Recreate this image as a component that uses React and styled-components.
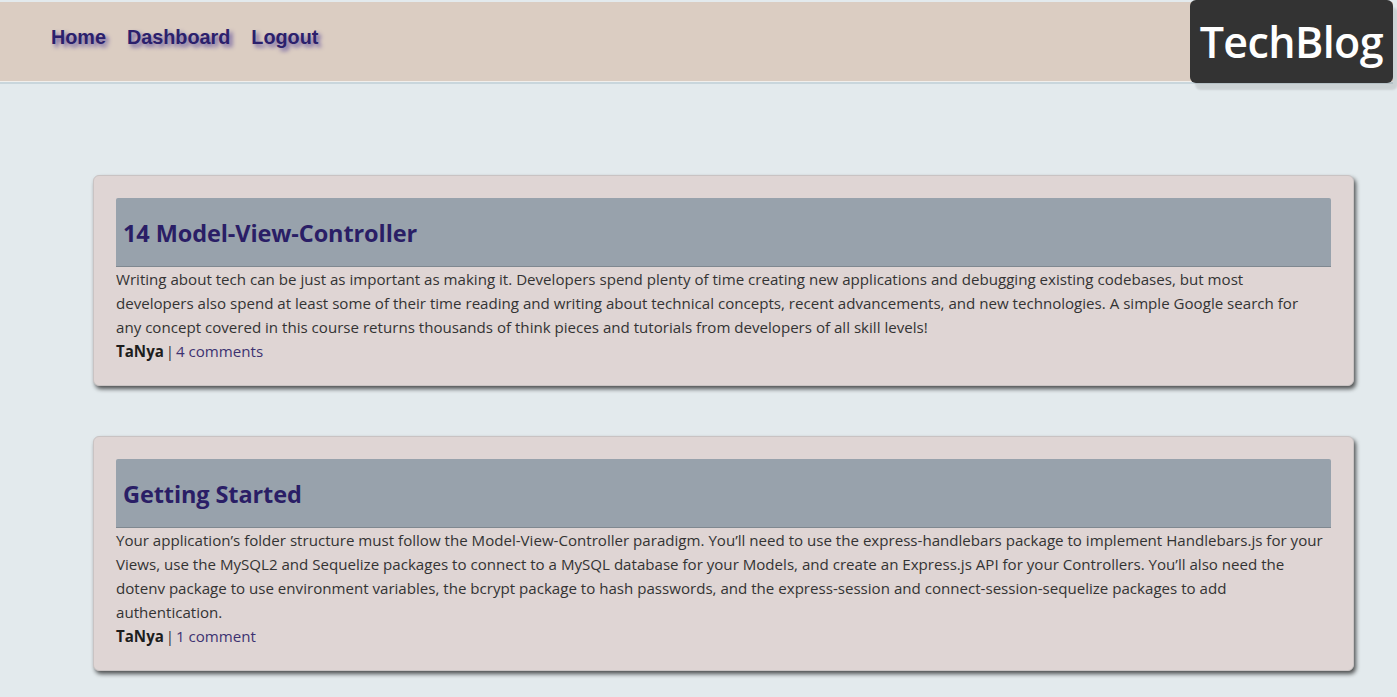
import React from "react";
import styled, { createGlobalStyle } from "styled-components";

const GlobalStyle = createGlobalStyle`
  html, body {
    margin: 0;
    padding: 0;
    background: #e3eaed;
  }
  body {
    font-family: "Open Sans", "Noto Sans", sans-serif;
    color: #333;
  }
`;

const Page = styled.div`
  min-height: 697px;
  padding-right: 4px;
  box-sizing: border-box;
`;

const Header = styled.header`
  display: flex;
  justify-content: space-between;
  align-items: flex-start;
  margin-top: 2px;
  height: 79px;
  background: #dbcdc2;
  border-bottom: 1px solid #f1efec;
  box-shadow: 0 2px 0 #c9d6dc;
`;

const Nav = styled.nav`
  display: flex;
  gap: 21px;
  padding: 24px 0 0 51px;
`;

const NavLink = styled.a`
  font-family: "Liberation Sans", Arial, sans-serif;
  font-weight: bold;
  font-size: 19.8px;
  color: #2b206c;
  text-decoration: none;
  text-shadow: 3px 3px 4px #6d5d9f;
  cursor: pointer;
`;

const Logo = styled.div`
  margin-top: -2px;
  height: 83px;
  box-sizing: border-box;
  padding: 0 10px;
  display: flex;
  align-items: center;
  background: #333333;
  border-radius: 6px;
  box-shadow: 5px 7px 2px rgba(0, 0, 0, 0.1);
  color: #fff;
  font-family: "Open Sans", sans-serif;
  font-weight: 600;
  font-size: 43px;
  letter-spacing: -0.6px;
`;

const Feed = styled.main`
  display: flex;
  flex-direction: column;
  gap: 50px;
  padding: 93px 39px 40px 93px;
`;

const Card = styled.article`
  background: #dfd5d4;
  border: 1px solid #c9c3c3;
  border-radius: 6px;
  box-shadow: 2px 3px 4px rgba(0, 0, 0, 0.65);
  padding: 22px 22px 22px;
`;

const TitleBar = styled.div`
  height: 69px;
  box-sizing: border-box;
  display: flex;
  align-items: center;
  padding: 2px 7px 0;
  background: #98a2ac;
  border-bottom: 1px solid #7f8890;
  border-radius: 2px 2px 0 0;
`;

const Title = styled.h2`
  margin: 0;
  font-size: 23.5px;
  font-weight: 700;
  color: #2a1e66;
  letter-spacing: -0.1px;
`;

const Body = styled.p`
  margin: 0;
  font-size: 15.1px;
  line-height: 24px;
  color: #333;
`;

const Line = styled.span`
  display: block;
  white-space: nowrap;
`;

const Meta = styled.div`
  font-size: 15.1px;
  line-height: 24px;
  color: #333;
  word-spacing: -2px;
`;

const Author = styled.b`
  color: #1d1d1d;
`;

const Comments = styled.a`
  color: #3d3271;
  text-decoration: none;
  word-spacing: 0;
  cursor: pointer;
`;

const posts = [
  {
    title: "14 Model-View-Controller",
    lines: [
      "Writing about tech can be just as important as making it. Developers spend plenty of time creating new applications and debugging existing codebases, but most",
      "developers also spend at least some of their time reading and writing about technical concepts, recent advancements, and new technologies. A simple Google search for",
      "any concept covered in this course returns thousands of think pieces and tutorials from developers of all skill levels!",
    ],
    author: "TaNya",
    comments: "4 comments",
  },
  {
    title: "Getting Started",
    lines: [
      "Your application\u2019s folder structure must follow the Model-View-Controller paradigm. You\u2019ll need to use the express-handlebars package to implement Handlebars.js for your",
      "Views, use the MySQL2 and Sequelize packages to connect to a MySQL database for your Models, and create an Express.js API for your Controllers. You\u2019ll also need the",
      "dotenv package to use environment variables, the bcrypt package to hash passwords, and the express-session and connect-session-sequelize packages to add",
      "authentication.",
    ],
    author: "TaNya",
    comments: "1 comment",
  },
];

const App = () => {
  return (
    <Page>
      <GlobalStyle />
      <Header>
        <Nav>
          <NavLink>Home</NavLink>
          <NavLink>Dashboard</NavLink>
          <NavLink>Logout</NavLink>
        </Nav>
        <Logo>TechBlog</Logo>
      </Header>
      <Feed>
        {posts.map(post => (
          <Card key={post.title}>
            <TitleBar>
              <Title>{post.title}</Title>
            </TitleBar>
            <Body>
              {post.lines.map((line, i) => <Line key={i}>{line}</Line>)}
            </Body>
            <Meta>
              <Author>{post.author}</Author> | <Comments>{post.comments}</Comments>
            </Meta>
          </Card>
        ))}
      </Feed>
    </Page>
  );
};

export default App;
